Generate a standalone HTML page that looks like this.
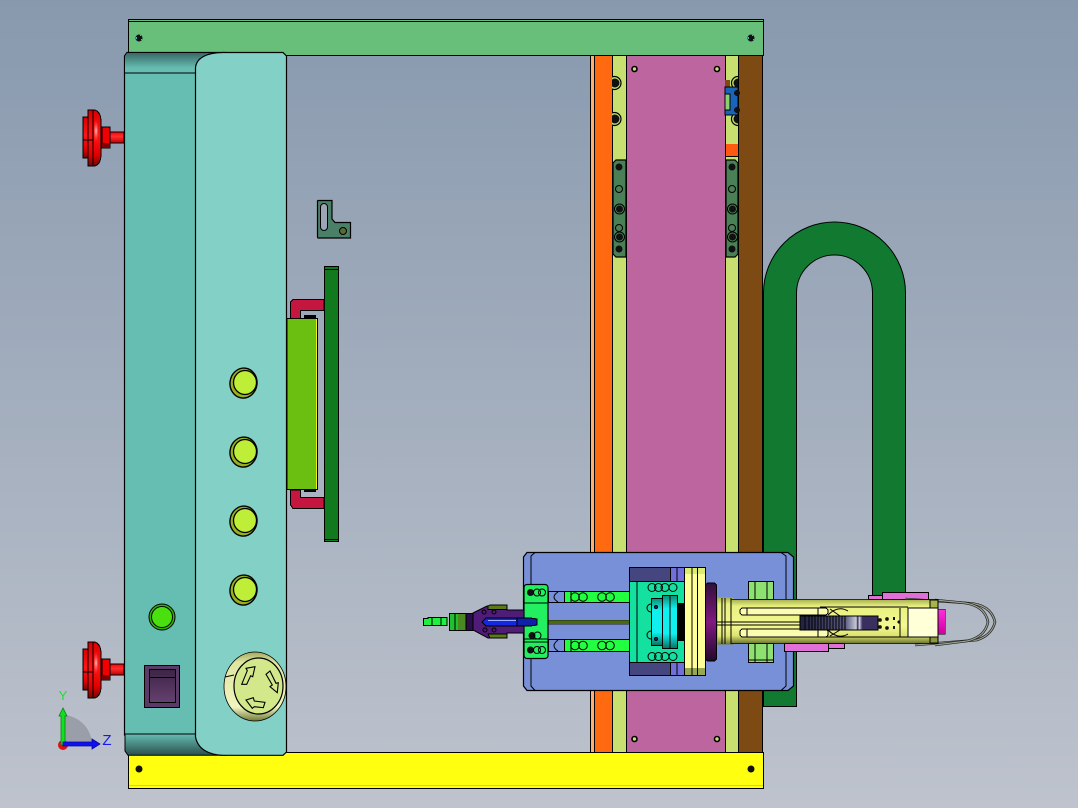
<!DOCTYPE html>
<html><head><meta charset="utf-8"><style>
html,body{margin:0;padding:0;width:1078px;height:808px;overflow:hidden;background:#a0abba}
svg{display:block}
</style></head><body>
<svg width="1078" height="808" viewBox="0 0 1078 808" xmlns="http://www.w3.org/2000/svg" shape-rendering="crispEdges">
<defs>
<linearGradient id="bg" x1="0" y1="0" x2="0" y2="1"><stop offset="0" stop-color="#8899ae"/><stop offset="1" stop-color="#bec3cd"/></linearGradient>
<linearGradient id="tt" x1="0" y1="0" x2="0" y2="1"><stop offset="0" stop-color="#386866"/><stop offset=".75" stop-color="#66bdb2"/><stop offset="1" stop-color="#66bdb2"/></linearGradient>
<linearGradient id="tb" x1="0" y1="0" x2="0" y2="1"><stop offset="0" stop-color="#66bdb2"/><stop offset="1" stop-color="#2a4f4d"/></linearGradient>
<linearGradient id="red" x1="0" y1="0" x2="0" y2="1"><stop offset="0" stop-color="#d80000"/><stop offset=".45" stop-color="#ff1515"/><stop offset=".8" stop-color="#e00000"/><stop offset="1" stop-color="#700808"/></linearGradient>
<linearGradient id="red2" x1="0" y1="0" x2="0" y2="1"><stop offset="0" stop-color="#ff0000"/><stop offset=".4" stop-color="#ff3030"/><stop offset="1" stop-color="#c00000"/></linearGradient>
<radialGradient id="hl"><stop offset="0" stop-color="#ffd0d0"/><stop offset="1" stop-color="#ff2020" stop-opacity="0"/></radialGradient>
<linearGradient id="cy" x1="0" y1="0" x2="0" y2="1"><stop offset="0" stop-color="#0c8a70"/><stop offset=".25" stop-color="#10f0f0"/><stop offset=".72" stop-color="#10f0f0"/><stop offset="1" stop-color="#087060"/></linearGradient>
<linearGradient id="pu" x1="0" y1="0" x2="0" y2="1"><stop offset="0" stop-color="#30103a"/><stop offset=".5" stop-color="#801a80"/><stop offset="1" stop-color="#20082a"/></linearGradient>
<linearGradient id="ye" x1="0" y1="0" x2="0" y2="1"><stop offset="0" stop-color="#a5b04e"/><stop offset=".15" stop-color="#e8f080"/><stop offset=".6" stop-color="#f4f890"/><stop offset=".82" stop-color="#dde470"/><stop offset="1" stop-color="#6a7430"/></linearGradient>
<linearGradient id="mg" x1="0" y1="0" x2="0" y2="1"><stop offset="0" stop-color="#ff30e0"/><stop offset="1" stop-color="#d000a0"/></linearGradient>
<linearGradient id="sw" x1="0" y1="0" x2="0" y2="1"><stop offset="0" stop-color="#3c2545"/><stop offset="1" stop-color="#664070"/></linearGradient>
<linearGradient id="btn" x1="0" y1="0" x2="0" y2="1"><stop offset="0" stop-color="#a0a860"/><stop offset=".15" stop-color="#dfe6a0"/><stop offset=".8" stop-color="#f0f4c0"/><stop offset="1" stop-color="#707a38"/></linearGradient>
<linearGradient id="bar" x1="0" y1="0" x2="1" y2="0"><stop offset="0" stop-color="#202040"/><stop offset=".58" stop-color="#5a5a80"/><stop offset=".72" stop-color="#c8c8d8"/><stop offset=".74" stop-color="#303050"/><stop offset=".76" stop-color="#d0d0e0"/><stop offset=".8" stop-color="#3a3060"/><stop offset="1" stop-color="#3a3060"/></linearGradient>
<clipPath id="colL"><rect x="612" y="55" width="14" height="100"/></clipPath>
<clipPath id="colR"><rect x="726" y="55" width="12" height="100"/></clipPath>
<g id="knob">
<rect x="110" y="132" width="14" height="11" fill="url(#red2)" stroke="#000"/>
<rect x="102" y="127" width="8" height="21" fill="#f00000" stroke="#000"/>
<rect x="102" y="143" width="8" height="5" fill="#800000"/>
<rect x="83" y="117" width="6" height="41" fill="url(#red)" stroke="#000"/>
<path d="M88 110H95Q101 112 101 122V154Q101 164 95 166H88Z" fill="url(#red)" stroke="#000"/>
<ellipse cx="96" cy="131" rx="3" ry="12" fill="url(#hl)" stroke="none"/>
<path d="M88 110V166M93 110V166M83 140H93" fill="none" stroke="#000"/>
</g>
<g id="yb" shape-rendering="auto"><ellipse cx="0.500" cy="0" rx="13.500" ry="15" fill="#98b020" stroke="#000" stroke-width="1.400" transform="rotate(8)"/><ellipse cx="2" cy="-0.500" rx="11.500" ry="12" fill="#bfee38" stroke="#000" stroke-width="1.300"/></g>
<g id="hd" shape-rendering="auto"><circle r="6.500" cx="0" fill="none" stroke="#000" stroke-width="1.200"/></g>
</defs>
<rect width="1078" height="808" fill="url(#bg)"/>

<!-- hose -->
<path d="M780 707V293A54.500 54.500 0 0 1 889 293V610" fill="none" stroke="#000" stroke-width="34" shape-rendering="auto"/>
<path d="M780 706V293A54.500 54.500 0 0 1 889 293V610" fill="none" stroke="#117a30" stroke-width="32" shape-rendering="auto"/>

<!-- vertical column -->
<rect x="590" y="55" width="173" height="698" fill="#000"/>
<rect x="591" y="55" width="3" height="697" fill="#ffb070"/>
<rect x="595" y="55" width="17" height="697" fill="#ff6a10"/>
<rect x="613" y="55" width="13" height="697" fill="#c8e070"/>
<rect x="627" y="55" width="98" height="697" fill="#bd659f"/>
<rect x="726" y="55" width="12" height="697" fill="#c8e070"/>
<rect x="739" y="55" width="23" height="697" fill="#7c4a12"/>
<g clip-path="url(#colL)" shape-rendering="auto">
<circle cx="614.500" cy="83" r="6.500" fill="#c8e070" stroke="#000" stroke-width="1.200"/><circle cx="615" cy="83" r="4.500" fill="#111"/>
<circle cx="614.500" cy="119" r="6.500" fill="#c8e070" stroke="#000" stroke-width="1.200"/><circle cx="615" cy="119" r="4.500" fill="#111"/>
</g>
<g clip-path="url(#colR)" shape-rendering="auto">
<circle cx="738" cy="83" r="6.500" fill="#c8e070" stroke="#000" stroke-width="1.200"/><circle cx="738" cy="83" r="4.500" fill="#111"/>
<circle cx="738" cy="119" r="6.500" fill="#c8e070" stroke="#000" stroke-width="1.200"/><circle cx="738" cy="119" r="4.500" fill="#111"/>
</g>
<rect x="725" y="80" width="5" height="7" fill="#7c4a12"/>
<rect x="725" y="87" width="13" height="28" fill="#1a64b8" stroke="#000"/>
<rect x="725" y="94" width="5" height="16" fill="#88d070" stroke="#000" stroke-width=".6"/>
<circle cx="737" cy="93" r="3" fill="#111"/><circle cx="737" cy="110" r="3" fill="#111"/>
<rect x="726" y="144" width="12" height="13" fill="#ff5a10"/>
<rect x="726" y="156" width="12" height="1" fill="#000"/>
<g shape-rendering="auto">
<circle cx="634.500" cy="69" r="2.500" fill="#c8e070" stroke="#000" stroke-width="1.600"/><circle cx="717" cy="69" r="2.500" fill="#c8e070" stroke="#000" stroke-width="1.600"/>
<circle cx="634.500" cy="739" r="2.500" fill="#c8e070" stroke="#000" stroke-width="1.600"/><circle cx="717" cy="739" r="2.500" fill="#c8e070" stroke="#000" stroke-width="1.600"/>
<path d="M616 160H626V257H616L613 254V163Z" fill="#4a8055" stroke="#000" stroke-width="1.200"/>
<path d="M726 160H735L738 163V254L735 257H726Z" fill="#4a8055" stroke="#000" stroke-width="1.200"/>
<g id="pl">
<circle cx="619" cy="167" r="3.500" fill="#111"/><circle cx="619" cy="189" r="3.500" fill="none" stroke="#000"/>
<circle cx="619.500" cy="209" r="3.500" fill="#111"/><circle cx="619.500" cy="209" r="5" fill="none" stroke="#000"/>
<circle cx="619" cy="228" r="3.500" fill="none" stroke="#000"/><circle cx="619.500" cy="237" r="3.500" fill="#111"/><circle cx="619.500" cy="237" r="5" fill="none" stroke="#000"/>
<circle cx="619" cy="249" r="3.500" fill="#111"/>
</g>
<use href="#pl" x="113"/>
</g>

<!-- top & bottom bars -->
<rect x="128.500" y="19.500" width="635" height="36" fill="#68bf7a" stroke="#000"/>
<rect x="129" y="21" width="634" height="1" fill="#000"/>
<rect x="128.500" y="752.500" width="635" height="36" fill="#ffff0f" stroke="#000"/>
<rect x="129" y="785" width="634" height="1" fill="#d8d810"/>
<g shape-rendering="auto">
<circle cx="139" cy="38" r="3.500" fill="#111"/><circle cx="751" cy="38" r="3.500" fill="#111"/>
<circle cx="139" cy="769" r="3.500" fill="#111"/><circle cx="751" cy="769" r="3.500" fill="#111"/>
</g>
<rect x="136" y="37" width="1" height="2" fill="#30c0d0"/><rect x="140" y="35" width="1" height="1" fill="#30c0d0"/><rect x="141" y="39" width="1" height="1" fill="#30c0d0"/>
<rect x="748" y="37" width="1" height="2" fill="#30c0d0"/><rect x="752" y="35" width="1" height="1" fill="#30c0d0"/><rect x="753" y="39" width="1" height="1" fill="#30c0d0"/>

<!-- left box -->
<g shape-rendering="auto">
<path d="M127 52.500H225V735H124.500V56Z" fill="#66bdb2" stroke="#000" stroke-width="1.200"/>
<path d="M127 53H225V73H125V56Z" fill="url(#tt)"/>
<path d="M125 734H225V755.300H128L125 751Z" fill="url(#tb)" stroke="#000" stroke-width="1"/>
<path d="M124.500 73H196" stroke="#000" fill="none"/>
<path d="M195.500 737V68C196 58 207 52.500 223 52.500H283L286.500 56V752L283 755.300H223C210 755 198 750 195.500 737Z" fill="#82d0c6" stroke="#000" stroke-width="1.200"/>
</g>
<use href="#knob"/>
<use href="#knob" y="532"/>
<g shape-rendering="auto">
<circle cx="162" cy="617" r="13" fill="#35b010" stroke="#000"/>
<circle cx="162" cy="617" r="10.500" fill="#4ae010" stroke="#000"/>
<use href="#yb" x="243" y="383"/><use href="#yb" x="243" y="452"/><use href="#yb" x="243" y="521"/><use href="#yb" x="243" y="590"/>
<ellipse cx="255" cy="686.500" rx="31" ry="34.500" fill="url(#btn)" stroke="#000" stroke-width=".8"/>
<path d="M225 677L234 675" stroke="#000" fill="none"/>
<ellipse cx="258.500" cy="686" rx="24.500" ry="28" fill="#d2e88a" stroke="#000" stroke-width="1.200"/>
<path d="M241.700 684.300L246.700 684.300L250.700 675.700L252.700 676.700L255 666.700L246 668.300L247.300 670.700Z M266 674.300L270 671L276 683.300L278.300 682.700L277.300 692.700L270 686.700L272.300 685Z M246 700L253.300 697.700L254.300 701L265 702.300L263.300 707.700L254.300 706.700L252.300 708.300Z" fill="#d2e88a" stroke="#000" stroke-width="1.100"/>
</g>
<rect x="144.500" y="665.500" width="35" height="42" fill="#5c3a68" stroke="#000"/>
<rect x="149.500" y="669.500" width="26" height="33" fill="url(#sw)" stroke="#000"/>
<rect x="150" y="677" width="25" height="1" fill="#000"/>

<!-- L bracket -->
<g shape-rendering="auto">
<path d="M318 200.500H332V219L335 222.500H350.500V238H318L317.500 237V201Z" fill="#4a8068" stroke="#000" stroke-width="1.200"/>
<rect x="320.500" y="203.500" width="7" height="27" rx="3.500" fill="#9aa6b6" stroke="#000"/>
<circle cx="343" cy="231" r="3.500" fill="#5a6a30" stroke="#000"/>
</g>

<!-- crimson bracket, green plate, lime block -->
<path d="M293 299.500H324V310.500H300.500V320H290.500V302Z M300.500 490V497.500H324V508.500H293L290.500 505V490Z" fill="#c4163f" stroke="#000"/>
<rect x="304" y="315" width="12" height="4" fill="#000"/><rect x="304" y="488" width="12" height="4" fill="#000"/>
<rect x="324.500" y="266.500" width="14" height="275" fill="#117a1f" stroke="#000"/>
<rect x="325" y="269" width="13" height="1" fill="#000"/><rect x="325" y="539" width="13" height="1" fill="#000"/>
<rect x="287" y="318.500" width="30.500" height="171" fill="#6abf10" stroke="#000"/>
<rect x="316" y="319" width="1" height="170" fill="#eef020"/>

<!-- carriage -->
<g shape-rendering="auto">
<path d="M527 552.500H788L793.500 557V686L788 690.500H527L523.500 686V557Z" fill="#7890d8" stroke="#000" stroke-width="1.200"/>
<path d="M535 552.500L531 556V686L535 690.500M781 552.500L786 556V686L781 690.500" fill="none" stroke="#000"/>
</g>
<rect x="748.500" y="581.500" width="25" height="18" fill="#8ee070" stroke="#000"/>
<rect x="748.500" y="643.500" width="25" height="19" fill="#8ee070" stroke="#000"/>
<path d="M755 582V599M767 582V599M755 644V662M767 644V662M749 660H773" stroke="#000" fill="none"/>

<!-- rods -->
<rect x="548.500" y="591.500" width="16" height="11" fill="#7890d8" stroke="#000"/>
<rect x="548.500" y="639.500" width="16" height="12" fill="#7890d8" stroke="#000"/>
<rect x="564.500" y="591.500" width="65" height="11" fill="#22ff40" stroke="#000"/>
<rect x="564.500" y="639.500" width="65" height="12" fill="#22ff40" stroke="#000"/>
<g fill="none" stroke="#000" shape-rendering="auto">
<circle cx="575" cy="597" r="4.300"/><circle cx="583" cy="597" r="4.300"/><circle cx="602" cy="597" r="4.300"/><circle cx="610" cy="597" r="4.300"/>
<circle cx="575" cy="645.500" r="4.300"/><circle cx="583" cy="645.500" r="4.300"/><circle cx="602" cy="645.500" r="4.300"/><circle cx="610" cy="645.500" r="4.300"/>
<path d="M558 592Q550 597 558 602M558 640Q550 646 558 651M571 592V602M571 640V651"/>
</g>
<rect x="548" y="620" width="104" height="4" fill="#4a6a10" stroke="#222" stroke-width=".5"/>

<!-- center block -->
<rect x="629.500" y="581.500" width="55" height="81" fill="#14e0a0" stroke="#000"/>
<rect x="629.500" y="567.500" width="41" height="14" fill="#45457f" stroke="#000"/>
<rect x="629.500" y="662.500" width="41" height="13" fill="#45457f" stroke="#000"/>
<rect x="670.500" y="567.500" width="14" height="14" fill="#7070d8" stroke="#000"/>
<rect x="670.500" y="662.500" width="14" height="13" fill="#7070d8" stroke="#000"/>
<path d="M677 568V581M677 663V675M637 582V662" stroke="#000" fill="none"/>
<rect x="677" y="603" width="8" height="38" fill="#000"/>
<rect x="651.500" y="598.500" width="11" height="47" fill="url(#cy)" stroke="#000"/>
<rect x="662.500" y="595.500" width="15" height="53" fill="url(#cy)" stroke="#000"/>
<path d="M670 596V648" stroke="#000" fill="none"/>
<g fill="none" stroke="#000" shape-rendering="auto">
<circle cx="652" cy="587.500" r="4"/><circle cx="658.500" cy="587.500" r="4"/><circle cx="665" cy="587.500" r="4"/><circle cx="673" cy="587.500" r="4"/>
<circle cx="652" cy="656.500" r="4"/><circle cx="658.500" cy="656.500" r="4"/><circle cx="665" cy="656.500" r="4"/><circle cx="673" cy="656.500" r="4"/>
<path d="M651 604A4 4 0 0 0 651 612M651 631A4 4 0 0 0 651 639"/>
<circle cx="656" cy="607" r="1.500" fill="#333"/><circle cx="656" cy="639" r="1.500" fill="#333"/>
</g>
<!-- yellow flange -->
<rect x="684.500" y="567.500" width="21" height="108" fill="#ffff99" stroke="#000"/>
<rect x="685" y="568" width="20" height="6" fill="#dcec70"/>
<rect x="685" y="668" width="20" height="7" fill="#98a850"/>
<path d="M692 568V675M697.500 568V675" stroke="#000" fill="none"/>
<rect x="705.500" y="583" width="11" height="78" rx="3" fill="url(#pu)" stroke="#000"/>

<!-- left plate -->
<g shape-rendering="auto">
<rect x="524" y="584.500" width="24" height="74" rx="3" fill="#22f060" stroke="#000" stroke-width="1.200"/>
<path d="M524 603H548M524 639H548M524 642H548" stroke="#000" fill="none"/>
<circle cx="530.500" cy="592.500" r="3.500" fill="#111"/><circle cx="537" cy="592.500" r="3.500" fill="none" stroke="#000"/><circle cx="542" cy="592.500" r="3.500" fill="none" stroke="#000"/>
<circle cx="530.500" cy="650" r="3.500" fill="#111"/><circle cx="537" cy="650" r="3.500" fill="none" stroke="#000"/><circle cx="542" cy="650" r="3.500" fill="none" stroke="#000"/>
<circle cx="532" cy="635.500" r="3.500" fill="#111"/><circle cx="537.500" cy="635.500" r="3.500" fill="none" stroke="#000"/>
</g>

<!-- left tool -->
<path d="M423.500 618.500H428V617.500H447V625.500H428V625.500H423.500Z" fill="#22f040" stroke="#000"/>
<path d="M432 618V625M441 618V625" stroke="#000" fill="none"/>
<rect x="449.500" y="613.500" width="16" height="17" fill="#22c030" stroke="#000"/>
<rect x="458" y="614" width="8" height="16" fill="#4a8a20"/>
<path d="M455 614V630" stroke="#000" fill="none"/>
<rect x="466" y="613.500" width="7" height="17" fill="#2a0e48" stroke="#000"/>
<path d="M473 613L487 606H507V610H524V633H507V638H488L473 630Z" fill="#4f1d78" stroke="#000" shape-rendering="auto"/>
<path d="M488 606L490 605H507V609.500H488ZM488 634H507V638H490Z" fill="#5a7a18" stroke="#000" stroke-width=".8"/>
<path d="M482 622L486 618H517V626H486Z" fill="#1428e0" stroke="#000"/>
<path d="M517 618H530L537 619V625L530 626H517Z" fill="#1020a8" stroke="#000"/>
<rect x="488" y="620" width="28" height="1" fill="#a0b0ff"/>
<g fill="none" stroke="#000" shape-rendering="auto"><circle cx="484" cy="612" r="2"/><circle cx="494" cy="612" r="2"/><circle cx="485" cy="630" r="2"/><circle cx="494" cy="630" r="2"/></g>

<!-- pink parts -->
<rect x="882.500" y="592.500" width="46" height="7" fill="#e070d8" stroke="#000"/>
<rect x="868.500" y="595.500" width="14" height="4" fill="#e070d8" stroke="#000"/>
<rect x="784.500" y="643.500" width="44" height="8" fill="#e070d8" stroke="#000"/>
<rect x="828.500" y="643.500" width="16" height="5" fill="#e070d8" stroke="#000"/>

<!-- wire loop -->
<g fill="none" shape-rendering="auto">
<path d="M905 599L967 603Q991 604 995 622Q992 635 977 640L915 645" stroke="#222" stroke-width="2.600"/>
<path d="M905 599L967 603Q991 604 995 622Q992 635 977 640L915 645" stroke="#9aa090" stroke-width="1.200"/>
<path d="M935 600L965 603Q985 606 988 622Q985 637 967 641L935 645" stroke="#222" stroke-width="2.600"/>
<path d="M935 600L965 603Q985 606 988 622Q985 637 967 641L935 645" stroke="#9aa090" stroke-width="1.200"/>
</g>

<!-- handle -->
<rect x="717.500" y="597.500" width="16" height="47" fill="url(#ye)" stroke="none"/>
<rect x="731" y="599.500" width="207" height="44" fill="url(#ye)" stroke="none"/>
<path d="M731 599.500H938V643.500H731" fill="none" stroke="#000" stroke-opacity=".75"/>
<rect x="908" y="608" width="30" height="29" fill="#ffffd8" stroke="#000"/>
<rect x="930" y="600" width="8" height="8" fill="#a8b448" stroke="#000" stroke-width=".6"/>
<rect x="930" y="637" width="8" height="6" fill="#8c963c" stroke="#000" stroke-width=".6"/>
<path d="M717 622H800M717 625H800M722 598V644M725 598V644M731 598V644M820 607H908M820 637H908M900 608V637" fill="none" stroke="#000"/>
<rect x="740" y="608" width="88" height="7" rx="3" fill="#fcfcb0" stroke="#000"/>
<rect x="740" y="629" width="88" height="8" rx="3" fill="#fcfcb0" stroke="#000"/>
<path d="M747 608V615M747 629V637M818 608V615M818 629V637" fill="none" stroke="#000"/>
<path d="M828 615Q838 605 848 611M830 609L840 616M828 630Q838 640 848 634M830 636L840 630" fill="none" stroke="#000" shape-rendering="auto"/>
<rect x="800" y="616" width="78" height="14" fill="url(#bar)" stroke="#000"/>
<path d="M805 616V630M809 616V630M812 616V630M815 616V630M818 616V630M821 616V630M824 616V630M827 616V630M830 616V630M833 616V630M836 616V630M839 616V630M842 616V630M845 616V630" stroke="#000" fill="none"/>
<g fill="#111"><circle cx="880" cy="620" r="1.800"/><circle cx="887" cy="619" r="1.800"/><circle cx="880" cy="627" r="1.800"/><circle cx="887" cy="628" r="1.800"/><circle cx="899" cy="622" r="1.500"/><rect x="893" y="617" width="2" height="3"/><rect x="893" y="626" width="2" height="3"/></g>
<rect x="938" y="609" width="7" height="25" fill="url(#mg)" stroke="#000" stroke-width=".5"/>

<!-- triad -->
<g shape-rendering="auto">
<path d="M63 745V715A30 30 0 0 1 92 745Z" fill="#9a9ea8"/>
<circle cx="63" cy="745" r="5" fill="#e01010"/>
<path d="M61 745V716H59L63 708L67 716H65V745Z" fill="#10e020" stroke="#0a8018" stroke-width=".8"/>
<path d="M63 742H92V739L100 744L92 749V746H63Z" fill="#1010f0" stroke="#0808a0" stroke-width=".8"/>
<text x="63" y="700" font-family="'Liberation Sans',sans-serif" font-size="13" fill="#20e030" text-anchor="middle">Y</text>
<text x="107" y="745" font-family="'Liberation Sans',sans-serif" font-size="15" fill="#1818f0" text-anchor="middle">Z</text>
</g>
</svg>
</body></html>
